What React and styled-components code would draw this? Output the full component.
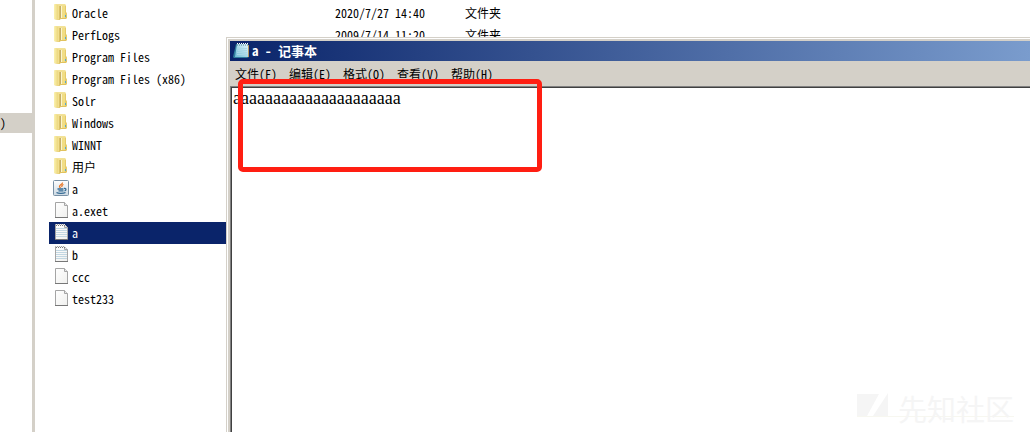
import React from "react";
import styled, { createGlobalStyle, css } from "styled-components";

const GlobalStyle = createGlobalStyle`
  * { box-sizing: border-box; }
  body {
    margin: 0;
    background: #fff;
    color: #000;
    font-family: "Noto Sans CJK SC", sans-serif;
    font-feature-settings: "hwid";
    font-size: 12px;
    line-height: 22px;
  }
`;

const Desktop = styled.main`
  position: relative;
  display: flex;
  min-height: 100vh;
  overflow: hidden;
`;

const TreePane = styled.nav`
  flex: 0 0 32px;
  padding-top: 113px;
`;

const TreeItem = styled.a`
  display: block;
  height: 20px;
  line-height: 20px;
  background: #d4d0c8;
  color: #000;
  text-decoration: none;
`;

const Splitter = styled.div`
  flex: 0 0 3px;
  background: #d4d0c8;
`;

const FilePane = styled.section`
  flex: 1;
  min-width: 0;
  padding: 2px 0 0 14px;
`;

const FileTable = styled.table`
  width: 100%;
  table-layout: fixed;
  border-collapse: collapse;
`;

const FileRow = styled.tr`
  height: 22px;
  ${(p) => p.$selected && css`
    background: #0a246a;
    color: #fff;
  `}
`;

const Cell = styled.td`
  padding: 0;
  white-space: nowrap;
  width: ${(p) => p.$width || "auto"};
`;

const Icon = styled.svg`
  display: block;
  flex: none;
  width: 16px;
  height: 16px;
`;

const FileName = styled.div`
  display: flex;
  align-items: center;
  gap: 3px;
  height: 22px;
  padding-left: 4px;

  ${Icon} {
    margin-bottom: 2px;
  }
`;

const Notepad = styled.section`
  position: absolute;
  inset: 37px 0 0 226px;
  display: flex;
  flex-direction: column;
  border: 1px solid #d4d0c8;
  border-width: 1px 0 0 1px;
  background: #d4d0c8;
`;

const Frame = styled.div`
  flex: 1;
  display: flex;
  flex-direction: column;
  border: 1px solid #fff;
  border-width: 1px 0 0 1px;
  padding: 2px 0 0 2px;
`;

const TitleBar = styled.header`
  display: flex;
  align-items: center;
  gap: 3px;
  height: 20px;
  padding-left: 3px;
  background: linear-gradient(90deg, #0a246a, #7a9ccd);
`;

const Title = styled.h1`
  margin: 0;
  color: #fff;
  font-size: 13px;
  font-weight: 700;
  line-height: 20px;
`;

const MenuBar = styled.nav`
  display: flex;
  gap: 12px;
  height: 25px;
  padding-left: 5px;
`;

const MenuButton = styled.button`
  padding: 0;
  border: 0;
  background: none;
  color: #000;
  font: inherit;
  font-feature-settings: inherit;
  line-height: 25px;
`;

const Editor = styled.textarea`
  flex: 1;
  width: 100%;
  padding: 0 1px;
  border: solid #404040;
  border-width: 1px 0 0 1px;
  outline: 1px solid #808080;
  outline-offset: 0;
  resize: none;
  background: #fff;
  color: #000;
  font: 18px/20px "Liberation Serif", serif;
`;

const EditorWell = styled.div`
  flex: 1;
  display: flex;
  padding: 1px 0 0 1px;
`;

const Highlight = styled.div`
  position: absolute;
  left: 238px;
  top: 79px;
  width: 304px;
  height: 93px;
  border: 5px solid #ff1e12;
  border-radius: 5px;
  pointer-events: none;
`;

const Watermark = styled.div`
  position: absolute;
  right: 16px;
  bottom: 15px;
  display: flex;
  align-items: flex-end;
  gap: 10px;
  height: 25px;
  border-bottom: 1px solid #f7f7f0;
  color: #f5f5f5;
  pointer-events: none;
`;

const WatermarkText = styled.span`
  align-self: flex-start;
  font-size: 29px;
  line-height: 32px;
`;

const WatermarkLogo = styled.svg`
  display: block;
  width: 31px;
  height: 23px;
`;

function FolderIcon() {
  return (
    <Icon viewBox="0 0 16 16" aria-hidden="true">
      <defs>
        <linearGradient id="folderFront" x1="0" x2="1" y1="0" y2="0">
          <stop offset="0" stopColor="#fbf2ae" />
          <stop offset="1" stopColor="#ecd67e" />
        </linearGradient>
        <linearGradient id="folderSide" x1="0" x2="0" y1="0" y2="1">
          <stop offset="0" stopColor="#f3e39a" />
          <stop offset="1" stopColor="#dfbf58" />
        </linearGradient>
      </defs>
      <path d="M1 1l1-1h10l1 1v7l1 1v5l-1 1H8l-2 1-5-1z" fill="url(#folderSide)" />
      <path d="M1 1l1-1 3 1v15l-4-1z" fill="url(#folderFront)" />
      <path d="M5 1h1v15l-1-1z" fill="#f1df90" />
      <path d="M6 2h1v13l-1 1z" fill="#dcc268" />
      <path d="M7 2h1v12H7z" fill="#c4ae68" />
      <path d="M8 2h1v12H8z" fill="#fbf5d0" />
      <path d="M9 2h3v12H9z" fill="#f1dd85" />
      <path d="M12 2h1v12h-1z" fill="#e5ca69" />
      <path d="M12 11h1v2h-1z" fill="#4fa9d6" />
    </Icon>
  );
}

function JavaIcon() {
  return (
    <Icon viewBox="0 0 16 16" aria-hidden="true">
      <defs>
        <linearGradient id="javaTile" x1="0" x2="0" y1="0" y2="1">
          <stop offset="0" stopColor="#fff" />
          <stop offset="1" stopColor="#cbd8e2" />
        </linearGradient>
      </defs>
      <rect x=".5" y=".5" width="15" height="15" rx="1" fill="url(#javaTile)" stroke="#7890a5" />
      <path d="M9.500 2.500C10 4 6.500 5 6.500 6.500c0 .8.800 1 1 1.500M10.500 4.500C9 5 8.500 6 9 7" fill="none" stroke="#e87525" strokeWidth="1.300" />
      <path d="M4.500 9h6M5.500 10.800h5M11 8.500c2.500-.5 2.500 2 .5 2.300M3.500 12.500c2 1.300 7 1 9 0" fill="none" stroke="#356b94" strokeWidth="1.300" />
    </Icon>
  );
}

function PageIcon({ lined }) {
  return (
    <Icon viewBox="0 0 16 16" aria-hidden="true">
      <defs>
        <linearGradient id="paper" x1="0" x2="1" y1="0" y2="1">
          <stop offset="0" stopColor="#fff" />
          <stop offset="1" stopColor="#f0f0ee" />
        </linearGradient>
      </defs>
      <path d="M2.500.5h9l3 3v12h-12z" fill="url(#paper)" stroke="#a5a5a5" />
      <path d="M11.500.5v3h3" fill="#e8e8e8" stroke="#a5a5a5" />
      <path d="M2 15.500h13" stroke="#777" />
      {lined && (
        <>
          <path d="M3 4.500h11M3 6.500h11M3 8.500h11M3 10.500h11M3 12.500h11" stroke="#c2d7e2" />
          <path d="M3 1.500h9" stroke="#777" strokeDasharray="1 1" />
          <path d="M3 .5h9" stroke="#eee" strokeDasharray="1 1" />
        </>
      )}
    </Icon>
  );
}

function NotepadIcon() {
  return (
    <Icon viewBox="0 0 16 16" aria-hidden="true">
      <defs>
        <linearGradient id="pad" x1="1" x2="0" y1="0" y2="1">
          <stop offset="0" stopColor="#e4f6fb" />
          <stop offset="1" stopColor="#6fbcd6" />
        </linearGradient>
      </defs>
      <path d="M3 1L0 14l1 1h13l2-1V2z" fill="#2f7d9b" />
      <path d="M4 1h11v13H2z" fill="url(#pad)" />
      <path d="M5 5.500h9M5 7.500h9M4 9.500h10M4 11.500h10" stroke="#a9d8e6" />
      <path d="M4 .5h11" stroke="#fff" strokeDasharray="1 1" />
      <path d="M4 2h11" stroke="#4b7e90" strokeDasharray="1 1" />
      <path d="M15.500 2v12" stroke="#b99a62" />
    </Icon>
  );
}

const icons = {
  folder: <FolderIcon />,
  java: <JavaIcon />,
  page: <PageIcon />,
  text: <PageIcon lined />,
};

const files = [
  { name: "Oracle", icon: "folder", date: "2020/7/27 14:40", type: "文件夹" },
  { name: "PerfLogs", icon: "folder", date: "2009/7/14 11:20", type: "文件夹" },
  { name: "Program Files", icon: "folder" },
  { name: "Program Files (x86)", icon: "folder" },
  { name: "Solr", icon: "folder" },
  { name: "Windows", icon: "folder" },
  { name: "WINNT", icon: "folder" },
  { name: "用户", icon: "folder" },
  { name: "a", icon: "java" },
  { name: "a.exet", icon: "page" },
  { name: "a", icon: "text", selected: true },
  { name: "b", icon: "text" },
  { name: "ccc", icon: "page" },
  { name: "test233", icon: "page" },
];

const menus = ["文件(F)", "编辑(E)", "格式(O)", "查看(V)", "帮助(H)"];

export default function App() {
  return (
    <>
      <GlobalStyle />
      <Desktop>
        <TreePane>
          <TreeItem href="#">)</TreeItem>
        </TreePane>
        <Splitter />
        <FilePane>
          <FileTable>
            <tbody>
              {files.map((file, i) => (
                <FileRow key={i} $selected={file.selected}>
                  <Cell $width="286px">
                    <FileName>
                      {icons[file.icon]}
                      <span>{file.name}</span>
                    </FileName>
                  </Cell>
                  <Cell $width="130px">{file.date}</Cell>
                  <Cell>{file.type}</Cell>
                </FileRow>
              ))}
            </tbody>
          </FileTable>
        </FilePane>
        <Notepad>
          <Frame>
            <TitleBar>
              <NotepadIcon />
              <Title>a - 记事本</Title>
            </TitleBar>
            <MenuBar>
              {menus.map((menu) => (
                <MenuButton key={menu} type="button">{menu}</MenuButton>
              ))}
            </MenuBar>
            <EditorWell>
              <Editor aria-label="a" spellCheck={false} defaultValue="aaaaaaaaaaaaaaaaaaaaa" />
            </EditorWell>
          </Frame>
        </Notepad>
        <Highlight />
        <Watermark>
          <WatermarkLogo viewBox="0 0 31 23" aria-hidden="true">
            <path d="M0 1h22L10 23H0z" fill="#f5f5f5" />
            <path d="M31 0v23H16z" fill="#f5f5f5" />
          </WatermarkLogo>
          <WatermarkText>先知社区</WatermarkText>
        </Watermark>
      </Desktop>
    </>
  );
}
